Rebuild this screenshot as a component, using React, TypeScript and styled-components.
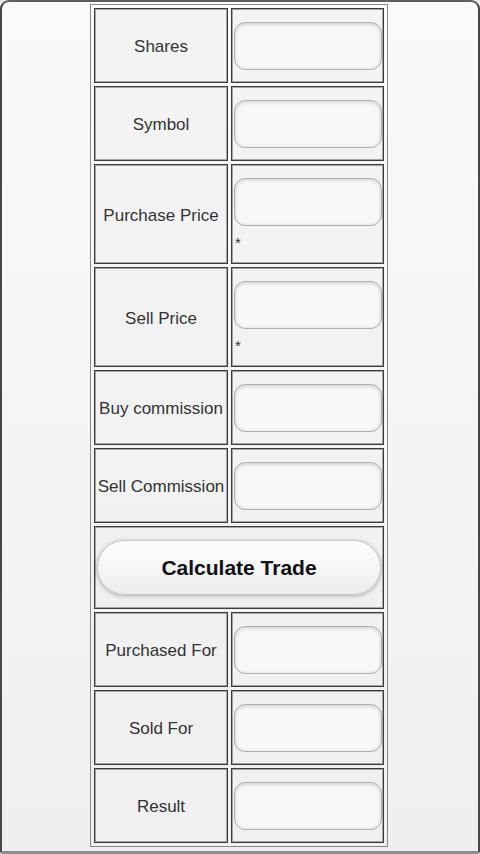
import styled, { createGlobalStyle } from "styled-components";

const GlobalStyle = createGlobalStyle`
  html, body {
    margin: 0;
    padding: 0;
    background: #e8e8e8;
  }
  body {
    font-family: "Liberation Sans", Arial, sans-serif;
  }
`;

const fields = [
  { label: "Shares" },
  { label: "Symbol" },
  { label: "Purchase Price", required: true },
  { label: "Sell Price", required: true },
  { label: "Buy commission" },
  { label: "Sell Commission" },
];

const results = ["Purchased For", "Sold For", "Result"];

export default function App() {
  return (
    <>
      <GlobalStyle />
      <Frame>
        <TradeTable>
          <tbody>
            {fields.map((f) => (
              <Row key={f.label}>
                <LabelCell $tall={f.required}>{f.label}</LabelCell>
                <InputCell $tall={f.required}>
                  <Field type="text" />
                  {f.required && <Star>*</Star>}
                </InputCell>
              </Row>
            ))}
            <Row>
              <ButtonCell colSpan={2}>
                <CalcButton type="button">Calculate Trade</CalcButton>
              </ButtonCell>
            </Row>
            {results.map((r) => (
              <Row key={r}>
                <LabelCell>{r}</LabelCell>
                <InputCell>
                  <Field type="text" readOnly />
                </InputCell>
              </Row>
            ))}
          </tbody>
        </TradeTable>
      </Frame>
    </>
  );
}

const Frame = styled.div`
  box-sizing: border-box;
  width: 480px;
  height: 854px;
  padding-top: 2px;
  border: 2px solid #474747;
  border-top-color: #5e5e5e;
  border-bottom: 3px solid #8e8e8e;
  border-radius: 9px 9px 3px 3px;
  background: linear-gradient(#fafafa, #efefef);
  display: flex;
  justify-content: center;
  align-items: flex-start;
`;

const TradeTable = styled.table`
  border-collapse: separate;
  border-spacing: 3px;
  border: 1px solid #8a8a8a;
  width: 298px;
  table-layout: fixed;
  margin-left: -2px;
`;

const Row = styled.tr``;

const Cell = styled.td`
  box-sizing: border-box;
  border: 1px solid #3c3c3c;
  box-shadow: inset 0 0 0 1px #a4a4a4;
  background: rgba(240, 240, 240, 0.6);
  vertical-align: middle;
`;

const LabelCell = styled(Cell)<{ $tall?: boolean }>`
  width: 134px;
  height: ${(p) => (p.$tall ? 100 : 75)}px;
  padding: 3px 0 0;
  text-align: center;
  font-size: 17px;
  color: #333;
  white-space: nowrap;
`;

const InputCell = styled(Cell)<{ $tall?: boolean }>`
  height: ${(p) => (p.$tall ? 100 : 75)}px;
  padding: 0 2px 0 2px;
`;

const Field = styled.input`
  display: block;
  box-sizing: border-box;
  width: 148px;
  height: 48px;
  margin: 0;
  border: 1px solid #b0b0b0;
  border-radius: 11px;
  background: #f8f8f8;
  box-shadow: inset 0 1px 4px rgba(0, 0, 0, 0.18);
  outline: none;
`;

const Star = styled.div`
  margin-top: 10px;
  font-size: 15px;
  line-height: 14px;
  color: #333;
  padding-left: 1px;
`;

const ButtonCell = styled(Cell)`
  height: 83px;
  padding: 0 2px 0 2px;
`;

const CalcButton = styled.button`
  display: block;
  box-sizing: border-box;
  width: 100%;
  height: 55px;
  border: 1px solid #c8c8c8;
  border-radius: 28px;
  background: linear-gradient(#ffffff, #ececec);
  box-shadow: 0 1px 4px rgba(0, 0, 0, 0.3);
  font-family: "Liberation Sans", Arial, sans-serif;
  font-weight: bold;
  font-size: 21px;
  color: #111;
  cursor: pointer;
`;
